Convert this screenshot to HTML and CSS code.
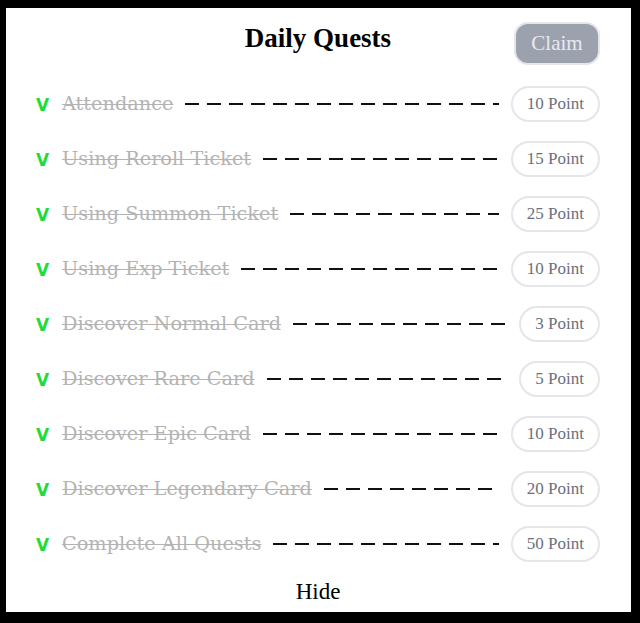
FILE: index.html
```html
<!DOCTYPE html>
<html lang="en">
<head>
  <meta charset="UTF-8" />
  <title>Daily Quests</title>
  <link rel="stylesheet" href="styles.css">
</head>
<body>

  <div class="panel">

    <!-- Header -->
    <div class="head">
      <h1>Daily Quests</h1>
      <button class="claim">Claim</button>
    </div>

    <!-- Quest list -->
    <ul class="quests">
      <li><span class="check">V</span><span class="name">Attendance</span><span class="dash"></span><span class="pill">10 Point</span></li>
      <li><span class="check">V</span><span class="name">Using Reroll Ticket</span><span class="dash"></span><span class="pill">15 Point</span></li>
      <li><span class="check">V</span><span class="name">Using Summon Ticket</span><span class="dash"></span><span class="pill">25 Point</span></li>
      <li><span class="check">V</span><span class="name">Using Exp Ticket</span><span class="dash"></span><span class="pill">10 Point</span></li>
      <li><span class="check">V</span><span class="name">Discover Normal Card</span><span class="dash"></span><span class="pill">3 Point</span></li>
      <li><span class="check">V</span><span class="name">Discover Rare Card</span><span class="dash"></span><span class="pill">5 Point</span></li>
      <li><span class="check">V</span><span class="name">Discover Epic Card</span><span class="dash"></span><span class="pill">10 Point</span></li>
      <li><span class="check">V</span><span class="name">Discover Legendary Card</span><span class="dash"></span><span class="pill">20 Point</span></li>
      <li><span class="check">V</span><span class="name">Complete All Quests</span><span class="dash"></span><span class="pill">50 Point</span></li>
    </ul>

    <div class="hide">Hide</div>

  </div>

</body>
</html>
```

FILE: styles.css
```css
body {
  background-color: #000;
  margin: 0;
  padding: 8px 0 0 6px;
  font-family: 'Liberation Serif', serif;
}
.panel {
  background-color: #fff;
  width: 625px;
  height: 604px;
  box-sizing: border-box;
  padding: 0 31px 0 30px;
  display: flex;
  flex-direction: column;
}
.head {
  height: 68px;
  display: flex;
  align-items: center;
  justify-content: center;
  position: relative;
}
h1 {
  margin: 0 0 8px;
  font-size: 27px;
  font-weight: bold;
  color: #000;
}
.claim {
  position: absolute;
  right: 0;
  top: 14px;
  width: 86px;
  height: 43px;
  border: 2px solid #e4e6ec;
  border-radius: 14px;
  background-color: #9ca1ae;
  color: #e8eaef;
  font-family: 'Liberation Serif', serif;
  font-size: 21px;
  padding: 0;
}
.quests {
  list-style-type: none;
  margin: 0;
  padding: 0;
}
.quests li {
  height: 55px;
  display: flex;
  align-items: center;
}
.check {
  color: #1fdc3b;
  font-family: 'DejaVu Sans', sans-serif;
  font-weight: bold;
  font-size: 17px;
  width: 26px;
  padding-top: 3px;
}
.name {
  color: #b3b3b3;
  font-family: 'DejaVu Serif', serif;
  font-size: 19.3px;
  text-decoration: line-through;
  text-decoration-thickness: 1px;
}
.dash {
  flex: 1;
  height: 2px;
  margin: 0 12px;
  background: repeating-linear-gradient(90deg, #111 0 14px, transparent 14px 22px);
}
.pill {
  height: 32px;
  line-height: 32px;
  border: 2px solid #e4e6ec;
  border-radius: 18px;
  padding: 0 14px;
  color: #6b6f7e;
  font-size: 17px;
}
.hide {
  flex: 1;
  display: flex;
  align-items: center;
  justify-content: center;
  font-size: 23px;
  color: #000;
}
```
